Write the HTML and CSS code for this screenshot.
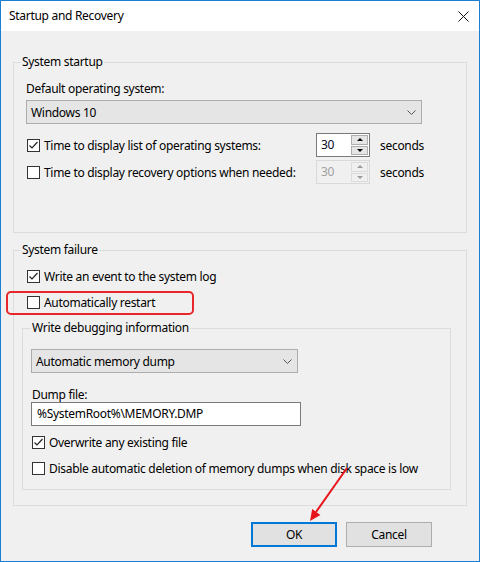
FILE: index.html
```html
<!DOCTYPE html>
<html>
<head>
<meta charset="utf-8">
<title>Startup and Recovery</title>
<link rel="stylesheet" href="styles.css">
</head>
<body>
<div class="window">
  <div class="titlebar">
    <span class="title">Startup and Recovery</span>
    <svg class="close" width="11" height="11" viewBox="0 0 11 11"><path d="M0.5 0.5 L10.5 10.5 M10.5 0.5 L0.5 10.5" stroke="#111" stroke-width="1" fill="none"/></svg>
  </div>
  <div class="client">
    <div class="group g1">
      <div class="legend">System startup</div>
      <div class="label l-default">Default operating system:</div>
      <div class="select sel-os">
        <span>Windows 10</span>
        <svg class="chev" width="9" height="5" viewBox="0 0 9 5"><path d="M0.5 0.5 L4.5 4.5 L8.5 0.5" stroke="#555" stroke-width="1" fill="none"/></svg>
      </div>
      <div class="timer-row r1">
        <div class="check">
          <span class="box"><svg width="11" height="11" viewBox="0 0 11 11"><path d="M1.5 5.5 L4 8 L9.5 2" stroke="#222" stroke-width="1.2" fill="none"/></svg></span>
          <span>Time to display list of operating systems:</span>
        </div>
        <div class="spin">
          <span class="spin-val">30</span>
          <div class="spin-btns"><span class="sb"><i class="tri up"></i></span><span class="sb"><i class="tri down"></i></span></div>
        </div>
        <span class="unit">seconds</span>
      </div>
      <div class="timer-row r2">
        <div class="check">
          <span class="box"></span>
          <span>Time to display recovery options when needed:</span>
        </div>
        <div class="spin disabled">
          <span class="spin-val">30</span>
          <div class="spin-btns"><span class="sb"><i class="tri up"></i></span><span class="sb"><i class="tri down"></i></span></div>
        </div>
        <span class="unit">seconds</span>
      </div>
    </div>

    <div class="group g2">
      <div class="legend">System failure</div>
      <div class="check crow c1">
        <span class="box"><svg width="11" height="11" viewBox="0 0 11 11"><path d="M1.5 5.5 L4 8 L9.5 2" stroke="#222" stroke-width="1.2" fill="none"/></svg></span>
        <span>Write an event to the system log</span>
      </div>
      <div class="check crow c2">
        <span class="box"></span>
        <span>Automatically restart</span>
      </div>
      <div class="group g3">
        <div class="legend">Write debugging information</div>
        <div class="select sel-dump">
          <span>Automatic memory dump</span>
          <svg class="chev" width="9" height="5" viewBox="0 0 9 5"><path d="M0.5 0.5 L4.5 4.5 L8.5 0.5" stroke="#555" stroke-width="1" fill="none"/></svg>
        </div>
        <div class="label l-dump">Dump file:</div>
        <div class="textbox">%SystemRoot%\MEMORY.DMP</div>
        <div class="check crow c3">
          <span class="box"><svg width="11" height="11" viewBox="0 0 11 11"><path d="M1.5 5.5 L4 8 L9.5 2" stroke="#222" stroke-width="1.2" fill="none"/></svg></span>
          <span>Overwrite any existing file</span>
        </div>
        <div class="check crow c4">
          <span class="box"></span>
          <span>Disable automatic deletion of memory dumps when disk space is low</span>
        </div>
      </div>
    </div>

    <div class="buttons">
      <button class="btn default">OK</button>
      <button class="btn">Cancel</button>
    </div>
  </div>

  <div class="highlight"></div>
  <svg class="arrow" width="478" height="560" viewBox="0 0 478 560">
    <line x1="346" y1="467" x2="315" y2="511" stroke="#e8141c" stroke-width="2"/>
    <polygon points="309,520 319.4,513.9 311.2,508.1" fill="#e8141c"/>
  </svg>
</div>
</body>
</html>
```

FILE: styles.css
```css
body {
  margin: 0;
  font-family: "Noto Sans", "DejaVu Sans", sans-serif;
  font-size: 12px;
  letter-spacing: -0.3px;
  color: #000;
  background: #fff;
}

.window {
  position: relative;
  width: 480px;
  height: 562px;
  box-sizing: border-box;
  border: 1px solid #1a7fd4;
  background: #f0f0f0;
  overflow: hidden;
}

.titlebar {
  height: 30px;
  background: #fff;
  display: flex;
  align-items: center;
  justify-content: space-between;
  padding: 0 10px 0 8px;
}

.title {
  line-height: 16px;
}

.client {
  padding: 0 12px;
}

.group {
  border: 1px solid #dcdcdc;
  box-sizing: border-box;
}

.legend {
  margin: -9px 0 0 7px;
  padding: 0 1px;
  width: max-content;
  background: #f0f0f0;
  line-height: 16px;
}

.g1 {
  margin-top: 31px;
  height: 171px;
}

.label {
  line-height: 16px;
}

.l-default {
  margin: 11px 0 0 12px;
}

.select {
  box-sizing: border-box;
  height: 24px;
  border: 1px solid #adadad;
  background: #e5e5e5;
  display: flex;
  align-items: center;
  justify-content: space-between;
  padding: 0 5px 0 4px;
}

.sel-os {
  margin: 3px 0 0 12px;
  width: 396px;
}

.timer-row {
  display: grid;
  grid-template-columns: 279px 54px auto;
  column-gap: 10px;
  align-items: center;
  height: 24px;
  margin-left: 13px;
}

.r1 { margin-top: 9px; }
.r2 { margin-top: 3px; }

.check {
  display: flex;
  align-items: center;
  gap: 4px;
  white-space: nowrap;
  min-width: 0;
}

.box {
  width: 13px;
  height: 13px;
  box-sizing: border-box;
  border: 1px solid #333;
  background: #fff;
  display: flex;
  align-items: center;
  justify-content: center;
  flex: none;
}

.spin {
  display: flex;
  height: 24px;
  box-sizing: border-box;
  border: 1px solid #7a7a7a;
  background: #fff;
}

.spin-val {
  flex: 1;
  padding-left: 4px;
  line-height: 22px;
  color: #0a0a2a;
}

.spin-btns {
  width: 17px;
  display: flex;
  flex-direction: column;
  gap: 1px;
  padding: 1px;
}

.sb {
  flex: 1;
  border: 1px solid #adadad;
  background: #e5e5e5;
  display: flex;
  align-items: center;
  justify-content: center;
}

.tri {
  width: 0;
  height: 0;
  border-left: 3px solid transparent;
  border-right: 3px solid transparent;
}

.tri.up { border-bottom: 3px solid #000; }
.tri.down { border-top: 3px solid #000; }

.spin.disabled {
  border-color: #d9d9d9;
  background: #f0f0f0;
}

.spin.disabled .spin-val { color: #a0a0a0; }
.spin.disabled .sb { border-color: #dcdcdc; background: #f0f0f0; }
.spin.disabled .tri.up { border-bottom-color: #9a9a9a; }
.spin.disabled .tri.down { border-top-color: #9a9a9a; }

.g2 {
  margin-top: 17px;
  height: 256px;
}

.crow {
  height: 20px;
  margin-left: 13px;
}

.c1 { margin-top: 8px; }
.c2 { margin-top: 6px; }

.g3 {
  margin: 16px 0 0 8px;
  width: 429px;
  height: 162px;
}

.g3 .legend {
  margin-left: 8px;
}

.sel-dump {
  margin: 13px 0 0 8px;
  width: 267px;
}

.l-dump {
  margin: 15px 0 0 9px;
  line-height: 14px;
}

.textbox {
  margin-left: 8px;
  width: 270px;
  height: 24px;
  box-sizing: border-box;
  border: 1px solid #7a7a7a;
  background: #fff;
  padding-left: 5px;
  line-height: 22px;
}

.g3 .crow { margin-left: 9px; }
.c3 { margin-top: 6px; }
.c4 { margin-top: 6px; }

.buttons {
  display: flex;
  justify-content: flex-end;
  gap: 9px;
  margin-top: 16px;
  padding-right: 35px;
}

.btn {
  width: 86px;
  height: 25px;
  box-sizing: border-box;
  border: 1px solid #adadad;
  background: #e1e1e1;
  font: inherit;
  letter-spacing: inherit;
  color: #000;
  padding: 0;
}

.btn.default {
  border: 2px solid #0078d7;
}

.highlight {
  position: absolute;
  left: 5px;
  top: 290px;
  width: 188px;
  height: 24px;
  box-sizing: border-box;
  border: 2px solid #e8262b;
  border-radius: 5px;
}

.arrow {
  position: absolute;
  left: 0;
  top: 0;
  pointer-events: none;
}
```
